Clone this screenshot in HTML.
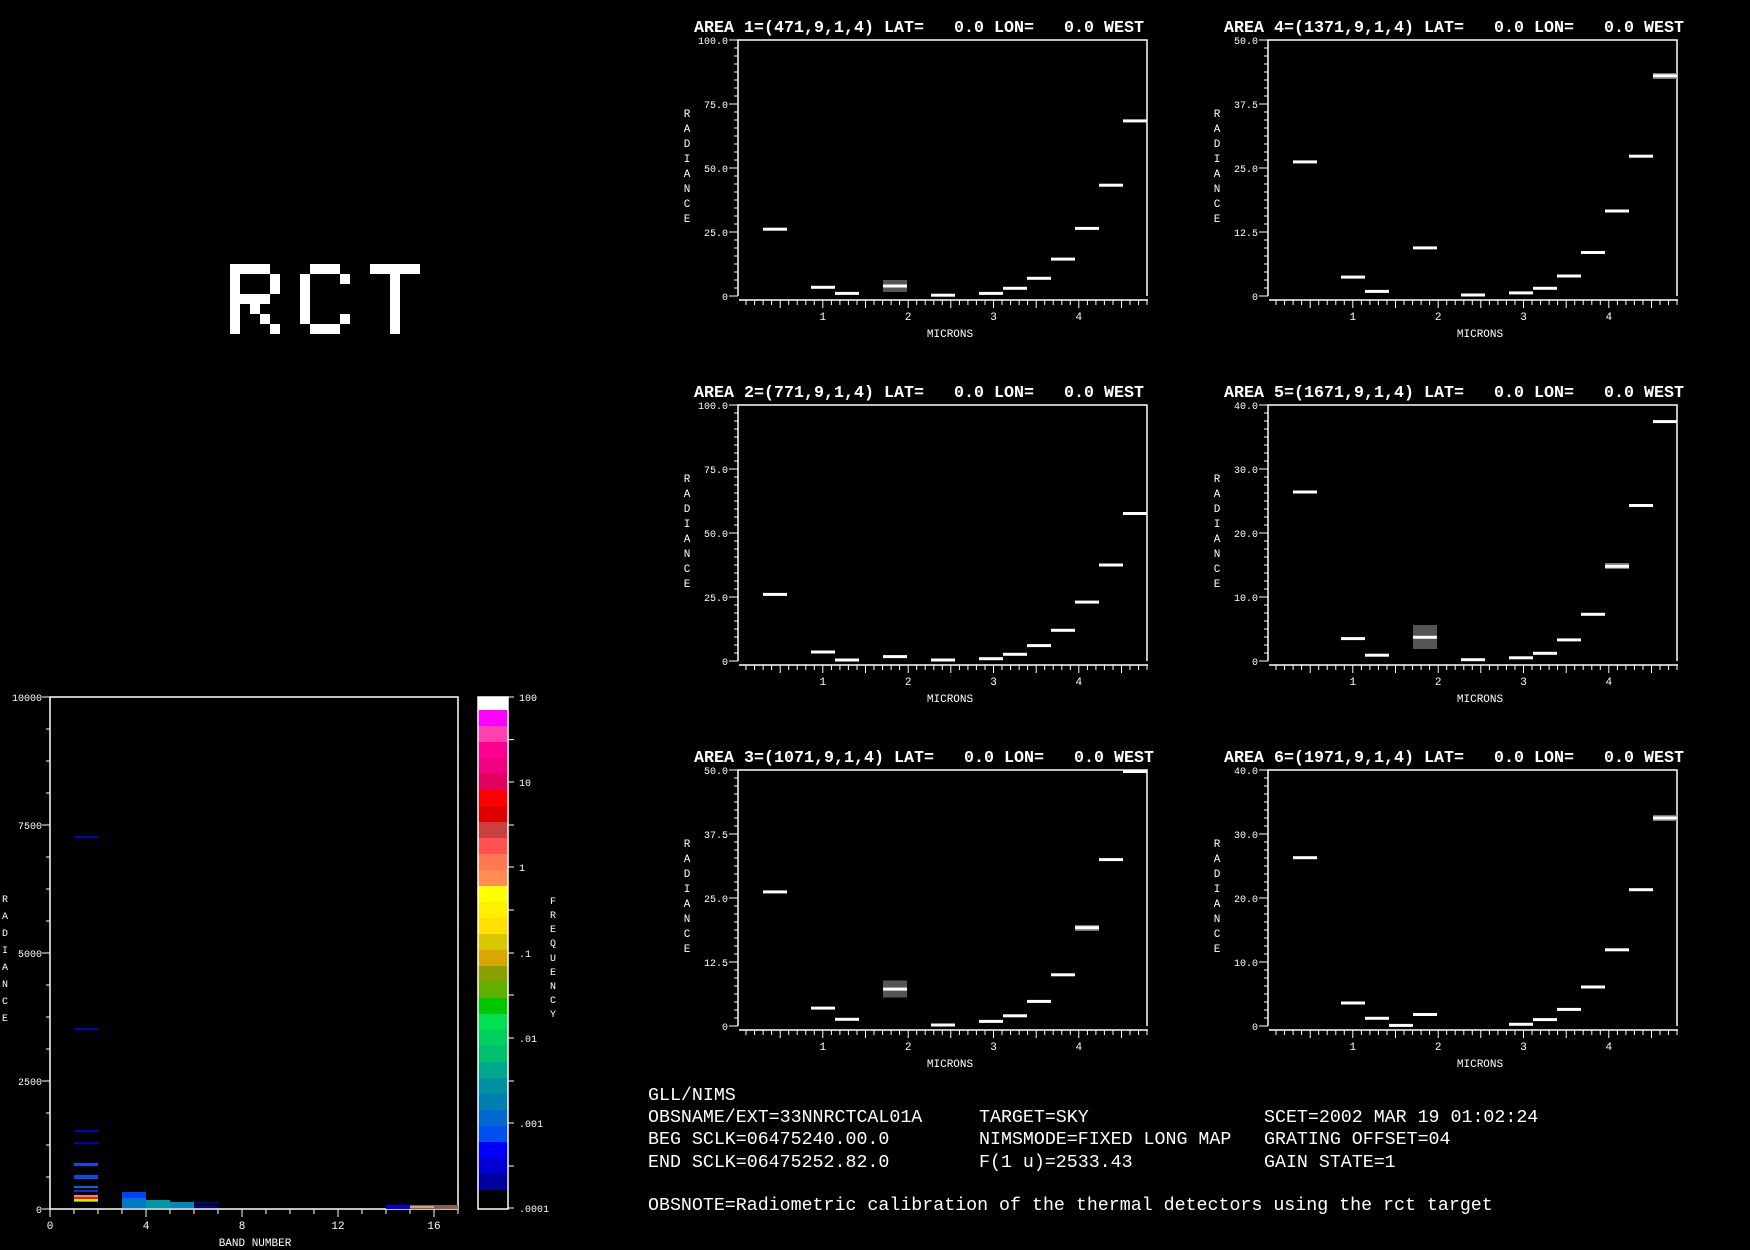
<!DOCTYPE html>
<html><head><meta charset="utf-8"><style>
html,body{margin:0;padding:0;background:#000;}
svg{display:block}
text{fill:#fff;font-family:"Liberation Mono",monospace;}
.t{font-size:16.6px;font-weight:bold;}
.s{font-size:10px;}
.m{font-size:11px;}
.b{font-size:18.3px;}
</style></head><body>
<svg width="1750" height="1250" viewBox="0 0 1750 1250" xmlns="http://www.w3.org/2000/svg">
<rect width="1750" height="1250" fill="#000"/>
<defs>
<g id="ax" fill="none" stroke="#fff">
<path d="M0 256V0H409V256" stroke-width="1.5"/>
<path d="M1 260H410" stroke-width="1.5"/>
<path stroke-width="1" d="M-9 0h9M-4 8h4M-4 16h4M-4 24h4M-4 32h4M-4 40h4M-4 48h4M-4 56h4M-9 64h9M-4 72h4M-4 80h4M-4 88h4M-4 96h4M-4 104h4M-4 112h4M-4 120h4M-9 128h9M-4 136h4M-4 144h4M-4 152h4M-4 160h4M-4 168h4M-4 176h4M-4 184h4M-9 192h9M-4 200h4M-4 208h4M-4 216h4M-4 224h4M-4 232h4M-4 240h4M-4 248h4M-9 256h9"/>
<path stroke-width="1" d="M8 260v5M16.6 260v5M25.1 260v5M33.6 260v5M42.2 260v8M50.7 260v5M59.2 260v5M67.8 260v5M76.3 260v5M84.8 260v8M93.4 260v5M101.9 260v5M110.4 260v5M119 260v5M127.5 260v8M136 260v5M144.6 260v5M153.1 260v5M161.6 260v5M170.2 260v8M178.7 260v5M187.2 260v5M195.8 260v5M204.3 260v5M212.8 260v8M221.4 260v5M229.9 260v5M238.4 260v5M247 260v5M255.5 260v8M264 260v5M272.6 260v5M281.1 260v5M289.6 260v5M298.2 260v8M306.7 260v5M315.2 260v5M323.8 260v5M332.3 260v5M340.8 260v8M349.4 260v5M357.9 260v5M366.4 260v5M375 260v5M383.5 260v8M392 260v5M400.6 260v5M409 260v5"/>
</g>
<g id="lab">
<text class="m" x="84.8" y="280" text-anchor="middle">1</text>
<text class="m" x="170.2" y="280" text-anchor="middle">2</text>
<text class="m" x="255.5" y="280" text-anchor="middle">3</text>
<text class="m" x="340.8" y="280" text-anchor="middle">4</text>
<text class="m" x="212" y="297" text-anchor="middle">MICRONS</text>
<text class="m" x="-51" y="77" text-anchor="middle">R</text>
<text class="m" x="-51" y="92" text-anchor="middle">A</text>
<text class="m" x="-51" y="107" text-anchor="middle">D</text>
<text class="m" x="-51" y="122" text-anchor="middle">I</text>
<text class="m" x="-51" y="137" text-anchor="middle">A</text>
<text class="m" x="-51" y="152" text-anchor="middle">N</text>
<text class="m" x="-51" y="167" text-anchor="middle">C</text>
<text class="m" x="-51" y="182" text-anchor="middle">E</text>
</g>
</defs>

<!-- RCT -->
<g fill="#fff">
<path d="M230 264h40v10h-40zM230 264h10v70h-10zM270 274h10v20h-10zM230 294h40v10h-40zM250 304h10v10h-10zM260 314h10v10h-10zM270 324h10v10h-10z"/>
<path d="M310 264h30v10h-30zM300 274h10v50h-10zM340 274h10v10h-10zM340 314h10v10h-10zM310 324h30v10h-30z"/>
<path d="M370 264h50v10h-50zM390 274h10v60h-10z"/>
</g>

<!-- Plot 1 -->
<g transform="translate(738,40)">
<text class="t" x="-44" y="-8" textLength="450" lengthAdjust="spacingAndGlyphs" xml:space="preserve">AREA 1=(471,9,1,4) LAT=   0.0 LON=   0.0 WEST</text>
<use href="#ax"/><use href="#lab"/>
<text class="s" x="-10" y="4" text-anchor="end">100.0</text><text class="s" x="-10" y="68" text-anchor="end">75.0</text><text class="s" x="-10" y="132" text-anchor="end">50.0</text><text class="s" x="-10" y="196" text-anchor="end">25.0</text><text class="s" x="-10" y="260" text-anchor="end">0</text>
<rect x="145" y="240" width="24" height="12" fill="#555"/>
<g fill="#fff">
<rect x="25" y="187.7" width="24" height="3"/><rect x="73" y="245.8" width="24" height="3"/><rect x="97" y="251.9" width="24" height="3"/><rect x="145" y="244.5" width="24" height="3"/><rect x="193" y="253.7" width="24" height="3"/><rect x="241" y="251.9" width="24" height="3"/><rect x="265" y="246.8" width="24" height="3"/><rect x="289" y="236.8" width="24" height="3"/><rect x="313" y="217.6" width="24" height="3"/><rect x="337" y="186.9" width="24" height="3"/><rect x="361" y="143.7" width="24" height="3"/><rect x="385" y="79.4" width="24" height="3"/>
</g></g>

<!-- Plot 4 -->
<g transform="translate(1268,40)">
<text class="t" x="-44" y="-8" textLength="460" lengthAdjust="spacingAndGlyphs" xml:space="preserve">AREA 4=(1371,9,1,4) LAT=   0.0 LON=   0.0 WEST</text>
<use href="#ax"/><use href="#lab"/>
<text class="s" x="-10" y="4" text-anchor="end">50.0</text><text class="s" x="-10" y="68" text-anchor="end">37.5</text><text class="s" x="-10" y="132" text-anchor="end">25.0</text><text class="s" x="-10" y="196" text-anchor="end">12.5</text><text class="s" x="-10" y="260" text-anchor="end">0</text>
<rect x="385" y="33" width="24" height="6" fill="#777"/>
<g fill="#fff">
<rect x="25" y="120.4" width="24" height="3"/><rect x="73" y="235.6" width="24" height="3"/><rect x="97" y="249.9" width="24" height="3"/><rect x="145" y="206.4" width="24" height="3"/><rect x="193" y="253.5" width="24" height="3"/><rect x="241" y="251.4" width="24" height="3"/><rect x="265" y="246.8" width="24" height="3"/><rect x="289" y="234.5" width="24" height="3"/><rect x="313" y="211" width="24" height="3"/><rect x="337" y="169.5" width="24" height="3"/><rect x="361" y="114.7" width="24" height="3"/><rect x="385" y="34.3" width="24" height="3"/>
</g></g>

<!-- Plot 2 -->
<g transform="translate(738,405)">
<text class="t" x="-44" y="-8" textLength="450" lengthAdjust="spacingAndGlyphs" xml:space="preserve">AREA 2=(771,9,1,4) LAT=   0.0 LON=   0.0 WEST</text>
<use href="#ax"/><use href="#lab"/>
<text class="s" x="-10" y="4" text-anchor="end">100.0</text><text class="s" x="-10" y="68" text-anchor="end">75.0</text><text class="s" x="-10" y="132" text-anchor="end">50.0</text><text class="s" x="-10" y="196" text-anchor="end">25.0</text><text class="s" x="-10" y="260" text-anchor="end">0</text>
<g fill="#fff">
<rect x="25" y="187.9" width="24" height="3"/><rect x="73" y="245.5" width="24" height="3"/><rect x="97" y="253.5" width="24" height="3"/><rect x="145" y="250.1" width="24" height="3"/><rect x="193" y="253.5" width="24" height="3"/><rect x="241" y="252.2" width="24" height="3"/><rect x="265" y="247.8" width="24" height="3"/><rect x="289" y="239.1" width="24" height="3"/><rect x="313" y="223.8" width="24" height="3"/><rect x="337" y="195.6" width="24" height="3"/><rect x="361" y="158.5" width="24" height="3"/><rect x="385" y="107" width="24" height="3"/>
</g></g>

<!-- Plot 5 -->
<g transform="translate(1268,405)">
<text class="t" x="-44" y="-8" textLength="460" lengthAdjust="spacingAndGlyphs" xml:space="preserve">AREA 5=(1671,9,1,4) LAT=   0.0 LON=   0.0 WEST</text>
<use href="#ax"/><use href="#lab"/>
<text class="s" x="-10" y="4" text-anchor="end">40.0</text><text class="s" x="-10" y="68" text-anchor="end">30.0</text><text class="s" x="-10" y="132" text-anchor="end">20.0</text><text class="s" x="-10" y="196" text-anchor="end">10.0</text><text class="s" x="-10" y="260" text-anchor="end">0</text>
<rect x="145" y="220" width="24" height="24" fill="#555"/>
<rect x="337" y="158" width="24" height="6" fill="#777"/>
<g fill="#fff">
<rect x="25" y="85.5" width="24" height="3"/><rect x="73" y="232.1" width="24" height="3"/><rect x="97" y="248.7" width="24" height="3"/><rect x="145" y="230.8" width="24" height="3"/><rect x="193" y="253.2" width="24" height="3"/><rect x="241" y="251.3" width="24" height="3"/><rect x="265" y="246.8" width="24" height="3"/><rect x="289" y="233.4" width="24" height="3"/><rect x="313" y="207.8" width="24" height="3"/><rect x="337" y="159.8" width="24" height="3"/><rect x="361" y="99" width="24" height="3"/><rect x="385" y="15.1" width="24" height="3"/>
</g></g>

<!-- Plot 3 -->
<g transform="translate(738,770)">
<text class="t" x="-44" y="-8" textLength="460" lengthAdjust="spacingAndGlyphs" xml:space="preserve">AREA 3=(1071,9,1,4) LAT=   0.0 LON=   0.0 WEST</text>
<use href="#ax"/><use href="#lab"/>
<text class="s" x="-10" y="4" text-anchor="end">50.0</text><text class="s" x="-10" y="68" text-anchor="end">37.5</text><text class="s" x="-10" y="132" text-anchor="end">25.0</text><text class="s" x="-10" y="196" text-anchor="end">12.5</text><text class="s" x="-10" y="260" text-anchor="end">0</text>
<rect x="145" y="210.5" width="24" height="17" fill="#555"/>
<rect x="337" y="155" width="24" height="6" fill="#777"/>
<g fill="#fff">
<rect x="25" y="120.4" width="24" height="3"/><rect x="73" y="236.6" width="24" height="3"/><rect x="97" y="247.8" width="24" height="3"/><rect x="145" y="217.6" width="24" height="3"/><rect x="193" y="253.5" width="24" height="3"/><rect x="241" y="249.9" width="24" height="3"/><rect x="265" y="244.3" width="24" height="3"/><rect x="289" y="229.9" width="24" height="3"/><rect x="313" y="203.3" width="24" height="3"/><rect x="337" y="156.2" width="24" height="3"/><rect x="361" y="88.1" width="24" height="3"/><rect x="385" y="0" width="24" height="3"/>
</g></g>

<!-- Plot 6 -->
<g transform="translate(1268,770)">
<text class="t" x="-44" y="-8" textLength="460" lengthAdjust="spacingAndGlyphs" xml:space="preserve">AREA 6=(1971,9,1,4) LAT=   0.0 LON=   0.0 WEST</text>
<use href="#ax"/><use href="#lab"/>
<text class="s" x="-10" y="4" text-anchor="end">40.0</text><text class="s" x="-10" y="68" text-anchor="end">30.0</text><text class="s" x="-10" y="132" text-anchor="end">20.0</text><text class="s" x="-10" y="196" text-anchor="end">10.0</text><text class="s" x="-10" y="260" text-anchor="end">0</text>
<rect x="385" y="45" width="24" height="6" fill="#777"/>
<g fill="#fff">
<rect x="25" y="86.2" width="24" height="3"/><rect x="73" y="231.5" width="24" height="3"/><rect x="97" y="246.8" width="24" height="3"/><rect x="121" y="253.9" width="24" height="3"/><rect x="145" y="243" width="24" height="3"/><rect x="241" y="252.8" width="24" height="3"/><rect x="265" y="248.1" width="24" height="3"/><rect x="289" y="237.9" width="24" height="3"/><rect x="313" y="215.5" width="24" height="3"/><rect x="337" y="178.3" width="24" height="3"/><rect x="361" y="118.2" width="24" height="3"/><rect x="385" y="46.5" width="24" height="3"/>
</g></g>

<!-- Histogram -->
<g>
<rect x="50" y="697" width="408" height="512" fill="none" stroke="#fff" stroke-width="1.5"/>
<path stroke="#fff" stroke-width="1" fill="none" d="M42 697h8M46 729h4M46 761h4M46 793h4M42 825h8M46 857h4M46 889h4M46 921h4M42 953h8M46 985h4M46 1017h4M46 1049h4M42 1081h8M46 1113h4M46 1145h4M46 1177h4M42 1209h8
M50 1209v8M74 1209v5M98 1209v5M122 1209v5M146 1209v8M170 1209v5M194 1209v5M218 1209v5M242 1209v8M266 1209v5M290 1209v5M314 1209v5M338 1209v8M362 1209v5M386 1209v5M410 1209v5M434 1209v8M458 1209v5"/>
<text class="s" x="42" y="701" text-anchor="end">10000</text>
<text class="s" x="42" y="829" text-anchor="end">7500</text>
<text class="s" x="42" y="957" text-anchor="end">5000</text>
<text class="s" x="42" y="1085" text-anchor="end">2500</text>
<text class="s" x="42" y="1213" text-anchor="end">0</text>
<text class="m" x="50" y="1229" text-anchor="middle">0</text>
<text class="m" x="146" y="1229" text-anchor="middle">4</text>
<text class="m" x="242" y="1229" text-anchor="middle">8</text>
<text class="m" x="338" y="1229" text-anchor="middle">12</text>
<text class="m" x="434" y="1229" text-anchor="middle">16</text>
<text class="m" x="255" y="1246" text-anchor="middle">BAND NUMBER</text>
<g text-anchor="middle">
<text class="s" x="5" y="902">R</text><text class="s" x="5" y="919">A</text><text class="s" x="5" y="936">D</text><text class="s" x="5" y="953">I</text><text class="s" x="5" y="970">A</text><text class="s" x="5" y="987">N</text><text class="s" x="5" y="1004">C</text><text class="s" x="5" y="1021">E</text>
</g>
<rect x="74" y="836" width="24" height="2" fill="#0000c0"/>
<rect x="74" y="1028" width="24" height="2" fill="#0000c0"/>
<rect x="74" y="1130" width="24" height="2" fill="#0000c0"/>
<rect x="74" y="1142" width="24" height="2" fill="#0000c0"/>
<rect x="74" y="1163" width="24" height="3" fill="#0050f0"/>
<rect x="74" y="1175" width="24" height="4" fill="#0050f0"/>
<rect x="74" y="1186" width="24" height="2" fill="#0068d0"/>
<rect x="74" y="1190" width="24" height="2" fill="#0030e0"/>
<rect x="74" y="1195" width="24" height="2" fill="#ff8050"/>
<rect x="74" y="1197" width="24" height="2" fill="#e02020"/>
<rect x="74" y="1199" width="24" height="2" fill="#f0e000"/>
<rect x="74" y="1201" width="24" height="1" fill="#60b000"/>
<rect x="122" y="1192" width="24" height="6" fill="#0040ff"/>
<rect x="122" y="1198" width="24" height="10" fill="#0078c8"/>
<rect x="146" y="1200" width="24" height="8" fill="#0098a8"/>
<rect x="170" y="1202" width="24" height="6" fill="#0088b8"/>
<rect x="194" y="1202" width="24" height="1.5" fill="#0000b0"/>
<rect x="194" y="1206" width="24" height="1.5" fill="#0000b0"/>
<rect x="386" y="1205" width="24" height="4" fill="#0000e0"/>
<rect x="410" y="1205" width="48" height="4" fill="#8a6050"/>
<rect x="410" y="1206" width="24" height="2" fill="#d0a080"/>
</g>

<!-- Colorbar -->
<g>
<rect x="478" y="697" width="30" height="13" fill="#fff"/>
<rect x="478" y="710" width="30" height="16" fill="#ff00ff"/>
<rect x="478" y="726" width="30" height="16" fill="#ff40b0"/>
<rect x="478" y="742" width="30" height="16" fill="#ff0090"/>
<rect x="478" y="758" width="30" height="16" fill="#f00080"/>
<rect x="478" y="774" width="30" height="16" fill="#e00060"/>
<rect x="478" y="790" width="30" height="16" fill="#ff0000"/>
<rect x="478" y="806" width="30" height="16" fill="#e00000"/>
<rect x="478" y="822" width="30" height="16" fill="#c84040"/>
<rect x="478" y="838" width="30" height="16" fill="#ff5050"/>
<rect x="478" y="854" width="30" height="16" fill="#ff7850"/>
<rect x="478" y="870" width="30" height="16" fill="#ff8c50"/>
<rect x="478" y="886" width="30" height="16" fill="#ffff00"/>
<rect x="478" y="902" width="30" height="16" fill="#fff000"/>
<rect x="478" y="918" width="30" height="16" fill="#ffe000"/>
<rect x="478" y="934" width="30" height="16" fill="#d8c800"/>
<rect x="478" y="950" width="30" height="16" fill="#d8a800"/>
<rect x="478" y="966" width="30" height="16" fill="#88a000"/>
<rect x="478" y="982" width="30" height="16" fill="#60b000"/>
<rect x="478" y="998" width="30" height="16" fill="#00c800"/>
<rect x="478" y="1014" width="30" height="16" fill="#00e050"/>
<rect x="478" y="1030" width="30" height="16" fill="#00d060"/>
<rect x="478" y="1046" width="30" height="16" fill="#00c070"/>
<rect x="478" y="1062" width="30" height="16" fill="#00a890"/>
<rect x="478" y="1078" width="30" height="16" fill="#0090a0"/>
<rect x="478" y="1094" width="30" height="16" fill="#0080b0"/>
<rect x="478" y="1110" width="30" height="16" fill="#0068d0"/>
<rect x="478" y="1126" width="30" height="16" fill="#0050f0"/>
<rect x="478" y="1142" width="30" height="16" fill="#0000ff"/>
<rect x="478" y="1158" width="30" height="16" fill="#0000d0"/>
<rect x="478" y="1174" width="30" height="16" fill="#0000a0"/>
<rect x="478" y="697" width="30" height="512" fill="none" stroke="#fff" stroke-width="1.5"/>
<path stroke="#fff" stroke-width="1" d="M508 697h6M508 739.6h6M508 782h6M508 825h6M508 867h6M508 910h6M508 953h6M508 995h6M508 1038h6M508 1081h6M508 1123h6M508 1166h6M508 1208h6"/>
<text class="s" x="519" y="701">100</text>
<text class="s" x="519" y="786">10</text>
<text class="s" x="519" y="871">1</text>
<text class="s" x="519" y="957">.1</text>
<text class="s" x="519" y="1042">.01</text>
<text class="s" x="519" y="1127">.001</text>
<text class="s" x="519" y="1212">.0001</text>
<g text-anchor="middle">
<text class="s" x="553" y="904">F</text><text class="s" x="553" y="918">R</text><text class="s" x="553" y="932">E</text><text class="s" x="553" y="946">Q</text><text class="s" x="553" y="961">U</text><text class="s" x="553" y="975">E</text><text class="s" x="553" y="989">N</text><text class="s" x="553" y="1003">C</text><text class="s" x="553" y="1017">Y</text>
</g>
</g>

<!-- Bottom text -->
<g xml:space="preserve">
<text class="b" x="648" y="1100">GLL/NIMS</text>
<text class="b" x="648" y="1122">OBSNAME/EXT=33NNRCTCAL01A</text>
<text class="b" x="979" y="1122">TARGET=SKY</text>
<text class="b" x="1264" y="1122">SCET=2002 MAR 19 01:02:24</text>
<text class="b" x="648" y="1144">BEG SCLK=06475240.00.0</text>
<text class="b" x="979" y="1144">NIMSMODE=FIXED LONG MAP</text>
<text class="b" x="1264" y="1144">GRATING OFFSET=04</text>
<text class="b" x="648" y="1167">END SCLK=06475252.82.0</text>
<text class="b" x="979" y="1167">F(1 u)=2533.43</text>
<text class="b" x="1264" y="1167">GAIN STATE=1</text>
<text class="b" x="648" y="1210">OBSNOTE=Radiometric calibration of the thermal detectors using the rct target</text>
</g>
</svg>
</body></html>
